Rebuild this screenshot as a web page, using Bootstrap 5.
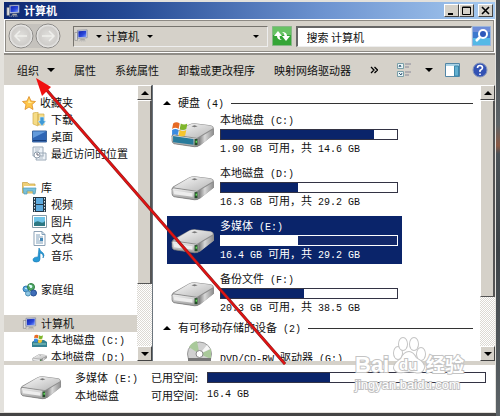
<!DOCTYPE html>
<html lang="zh-CN">
<head>
<meta charset="utf-8">
<meta name="viewport" content="width=device-width, initial-scale=1">
<title>计算机</title>
<link href="https://cdn.jsdelivr.net/npm/bootstrap@5.3.0/dist/css/bootstrap.min.css" rel="stylesheet">
<style>
:root{--face:#d5d1c9;--navy:#0a246a}
body{font:11px/17px "Noto Sans CJK SC",sans-serif;color:#111;background:#fff;white-space:nowrap}
button,input{font:inherit;color:inherit}
svg{display:block;flex:none}
.plain{border:0;background:none;padding:0}
.lt{font-family:"Liberation Mono",monospace;font-size:10px;white-space:pre}
.shell{padding:2px 1px 1px 4px;background:#e3e1dc;border-bottom:3px solid #444;overflow:hidden}
.desk{width:4px;background:linear-gradient(#454a4e,#5d6468 30%,#8b5a45 35%,#4b5257 37%,#3d4347 60%,#5d6468)}
.caption{height:17px;background:linear-gradient(90deg,#0d2872,#254a94 25%,#6d93d0 65%,#a6caf0);color:#fff;font-weight:700;padding:0 2px}
.raised{background:var(--face);border:1px solid;border-color:#fff #444 #444 #fff;display:flex;align-items:center;justify-content:center;padding:0}
.caption .raised{width:15px;height:13px;color:#000}
.address{height:34px;background:var(--face);border:1px solid #fff;outline:1px solid #8d8a84;outline-offset:-2px;padding:0 3px}
.travel{margin-right:12px}
.sunken{flex:192 1 0;height:21px;border:1px solid;border-color:#77746e #eee #eee #77746e;background:var(--face)}
.search{flex:155 1 0;height:21px;border:1px solid;border-width:2px 1px 1px 2px;border-color:#666 #eee #eee #666;background:#fff;padding:0 9px;min-width:0;border-radius:0}
.commands{height:32px;border-top:2px solid #908d87;background:var(--face);padding:0 16px 0 13px;gap:19px}
.tools,.tools button{gap:12px}
.tri{width:0;height:0;border:4px solid transparent;border-top-color:#000;border-bottom:0;flex:none}
.tri.sm{border-width:3px 3px 0}
.tri.up{border:4px solid transparent;border-bottom-color:#000;border-top:0}
.tree{width:133px;padding-top:9px;background:#fff}
.tree a{display:flex;align-items:center;height:17px;gap:4px;padding-left:18px;color:inherit;text-decoration:none}
.tree a.sub{padding-left:28px}
.tree a.on{background:var(--face)}
.tree .space{height:17px}
.scroller{width:15px;background:repeating-conic-gradient(#fff 0 25%,#dcd9d3 0 50%) 0 0/2px 2px}
.scroller .raised{height:15px;width:15px;flex:none}
.thumb{border:1px solid;border-color:#fff #555 #555 #fff;border-right-width:2px;background:var(--face)}
.thumb.a{flex:0 1 184px}.thumb.b{flex:0 1 197px}
.pane{background:#fff;padding:5px 7px 0 11px;overflow:hidden}
.group{height:18px;gap:7px;margin-left:-1px}
.group hr{margin:0;opacity:1;border-top:1px solid #333}
.drives{gap:5px;padding:0 0 2px 3px;margin-top:-2px}
.drive{height:48px;width:235px;max-width:100%;padding:0 4px 0 3px;gap:5px;text-align:left}
.drive .info{line-height:14px}
.meter{height:11px;border-radius:0;border:1px solid #334;background:#fff}
.meter .progress-bar{background:var(--navy)}
.drive.on{background:var(--navy);color:#fff}
.drive.on .meter{border-color:#fff;background:#12286a}
.drive.on .progress-bar{background:#fff}
.disc{padding-left:23px}
.details{background:#fff;border-top:4px solid var(--face);height:51px;padding:3px 9px 0 15px;line-height:18px;gap:13px}
.details dl{grid-template-columns:76px 56px 1fr;grid-auto-rows:18px}
.overlay{left:0;top:0;pointer-events:none}
.stamp{right:31px;bottom:17px;width:116px;height:62px}
</style>
<script src="https://cdn.jsdelivr.net/npm/bootstrap@5.3.0/dist/js/bootstrap.bundle.min.js"></script>
</head>
<body class="m-0">
<svg width="0" height="0" class="position-absolute" aria-hidden="true">
<defs>
<linearGradient id="gTop" x1="0" x2="1" y1="0" y2="1"><stop stop-color="#fafafa"/><stop offset="1" stop-color="#b4b4b4"/></linearGradient>
<linearGradient id="gSide" x1="0" x2="1"><stop stop-color="#777"/><stop offset=".4" stop-color="#d8d8d8"/><stop offset="1" stop-color="#8a8a8a"/></linearGradient>
<linearGradient id="gFront" x1="0" x2="0" y1="0" y2="1"><stop stop-color="#f4f4f4"/><stop offset="1" stop-color="#9b9b9b"/></linearGradient>
<linearGradient id="gScr" x1="0" x2="1" y1="0" y2="1"><stop stop-color="#0d1fa8"/><stop offset=".6" stop-color="#2b49dd"/><stop offset="1" stop-color="#8ba8ff"/></linearGradient>
<radialGradient id="gBall"><stop stop-color="#e0dfdc"/><stop offset=".75" stop-color="#cfcdca"/><stop offset="1" stop-color="#f3f3f2"/></radialGradient>
</defs>
<symbol id="drive" viewBox="0 0 44 26">
<path d="M2 16Q1 14 3 12L19 3Q21 2 24 2L40 4Q43 5 43 8V13L29 24Q27 25 24 25L4 22Q2 21 2 19Z" fill="#8d8d8d"/>
<path d="M3 13L19 3.500Q21 2.500 24 2.500L40 4.500Q42 5 42 7L27 16Q25 17 23 16.500Z" fill="url(#gTop)"/>
<path d="M28 16.500L43 7.500V13L29 24Z" fill="url(#gSide)"/>
<path d="M2 15Q2 13 4 13.500L25 16.500Q28 17 28 19V24Q27 25 24 25L4 22Q2 21 2 19Z" fill="url(#gFront)" stroke="#777" stroke-width=".7"/>
<path d="M4 16L22 18.500V22L4 19.500Z" fill="#ededed"/><path d="M24 17.500h3v6h-3z" fill="#244b28"/><path d="M25 19h1.500v2h-1.500z" fill="#62e05a"/>
<path d="M21 5l3-1 3 1-3 1z" fill="#777"/>
</symbol>
<symbol id="flag" viewBox="0 0 14 14"><path d="M1 2Q4 0 7 2L6 7Q3 5 0 7Z" fill="#e66a25"/><path d="M8 2Q11 4 14 2L13 7Q10 9 7 7Z" fill="#7fb62c"/><path d="M0 8Q3 6 6 8L5 13Q2 11 0 13Z" fill="#3b8be0"/><path d="M7 8Q10 10 13 8L12 13Q9 15 6 13Z" fill="#f6c52e"/></symbol>
<symbol id="sysdrive" viewBox="0 0 44 26"><use href="#drive" width="44" height="26"/><path d="M3 14.500L23 17.500V23L3 20.500Z" fill="#287b9b"/><use href="#flag" x="2" y="0" width="15" height="15"/></symbol>
<symbol id="pc" viewBox="0 0 16 16"><path d="M1 4h3v9H1z" fill="#dedede" stroke="#777" stroke-width=".6"/><path d="M4 1.500L15 1V10L4 10.500Z" fill="#dfe3ef" stroke="#66708c" stroke-width=".7"/><path d="M5 2.500L14 2V9L5 9.500Z" fill="url(#gScr)"/><path d="M8 11h4l1 2H6z" fill="#a8a8a8"/><path d="M4 14h10" stroke="#bbb" stroke-dasharray="1 1"/></symbol>
</svg>

<div class="d-flex vh-100 position-relative overflow-hidden">
<div class="shell d-flex flex-column flex-grow-1">
  <header class="caption d-flex align-items-center">
    <svg width="14" height="14"><use href="#pc"/></svg><span class="ms-1 me-auto">计算机</span>
    <button class="raised" aria-label="最小化"><svg width="9" height="9"><path d="M1 7h5v2H1z"/></svg></button>
    <button class="raised" aria-label="最大化"><svg width="9" height="9"><path d="M.5 1h8v7.500h-8zM.5 1.500h8" fill="none" stroke="#000"/></svg></button>
    <button class="raised ms-1" aria-label="关闭"><svg width="9" height="9"><path d="M1 1l7 7M8 1L1 8" stroke="#000" stroke-width="1.600"/></svg></button>
  </header>

  <div class="address d-flex align-items-center flex-shrink-0">
    <svg width="53" height="26" class="travel" role="img" aria-label="后退 前进"><path d="M13 1h27v24H13z" fill="#c5c2bd"/><g fill="url(#gBall)" stroke="#8d8b88"><circle cx="13" cy="13" r="12"/><circle cx="40" cy="13" r="12"/></g><g fill="none" stroke="#efefec" stroke-width="1.500"><path d="M19 13H8M12 8l-5 5 5 5M34 13h11M41 8l5 5-5 5"/></g></svg>
    <div class="sunken d-flex align-items-center">
      <svg width="14" height="14"><use href="#pc"/></svg>
      <i class="tri sm ms-2"></i><button class="plain ms-1">计算机</button><i class="tri sm ms-2 me-auto"></i><i class="tri sm me-2"></i>
    </div>
    <button class="plain mx-1" aria-label="刷新"><svg width="20" height="20"><path d="M.5 .5h19v19H.5z" fill="#35a536" stroke="#87b787"/><path d="M1 1h18v8H1z" fill="#67c264"/><path d="M2 10l4-5 4 5H7.500q0 3 2.500 4-5 0-5-4zM18 10l-4 5-4-5h2.500q0-3-2.500-4 5 0 5 4z" fill="#fff"/></svg></button>
    <input class="search" aria-label="搜索" value="搜索 计算机">
    <button class="plain" aria-label="开始搜索"><svg width="19" height="20"><path d="M.5 .5h18v19H.5z" fill="#3d79ce" stroke="#9bb5dc"/><path d="M1 12h17v7H1z" fill="#55b9e6"/><path d="M1 1h17v5H1z" fill="#6d8cd8"/><circle cx="11" cy="8" r="4" fill="#2d58bb" stroke="#fff" stroke-width="2"/><path d="M8 11l-4 4" stroke="#fff" stroke-width="2.500"/></svg></button>
  </div>

  <nav class="commands d-flex align-items-center flex-shrink-0">
    <button class="plain d-flex align-items-center">组织<i class="tri ms-2"></i></button>
    <button class="plain">属性</button><button class="plain">系统属性</button><button class="plain">卸载或更改程序</button><button class="plain">映射网络驱动器</button>
    <button class="plain" aria-label="更多"><svg width="8" height="8"><path d="M1 1l3 3-3 3M4.500 1l3 3-3 3" fill="none" stroke="#000" stroke-width="1.300"/></svg></button>
    <div class="tools d-flex align-items-center ms-auto">
      <button class="plain d-flex align-items-center" aria-label="更改视图"><svg width="16" height="16"><path d="M.5 1.500h6v5h-6zM.5 9.500h6v5h-6z" fill="#e8f4f6" stroke="#7a9fa8"/><path d="M2 5l1-2 1 2M2 11l2 2 1-2" stroke="#357" fill="none"/><path d="M8 2h6M8 5h4M8 10h6M8 13h4" stroke="#889"/></svg><i class="tri"></i></button>
      <button class="plain" aria-label="预览窗格"><svg width="15" height="14"><path d="M.5 .5h14v13H.5z" fill="#fff" stroke="#5286a6"/><path d="M1 1h13v2H1z" fill="#a9d2e6"/><path d="M9.500 3h4v10h-4z" fill="#62afd0" stroke="#3a86aa"/></svg></button>
      <button class="plain" aria-label="帮助"><svg width="16" height="16"><circle cx="8" cy="8" r="7" fill="#3352b4" stroke="#8494ba"/><path d="M5.500 6q0-2.500 2.500-2.500T10.500 6Q10.500 7 8 8.500V10M8 11.500v1.500" fill="none" stroke="#fff" stroke-width="1.600"/></svg></button>
    </div>
  </nav>

  <main class="d-flex flex-grow-1 overflow-hidden" style="flex-basis:0">
    <nav class="tree flex-shrink-0 overflow-hidden">
      <a href="#"><svg width="14" height="14"><path d="M7 .5l2 4.500 4.500.5-3.500 3 1 5L7 11l-4 2.500 1-5L.5 5.500 5 5z" fill="#ffc74b" stroke="#dc8c24" stroke-width=".8"/><path d="M7 3l1 3 3 1H6z" fill="#fff0a8"/></svg>收藏夹</a>
      <a href="#" class="sub"><svg width="15" height="15"><path d="M1 1l5-1v14l-5-2zM6 2h6v11H6z" fill="#f6dc86" stroke="#d0ad4c" stroke-width=".7"/><path d="M8 5h4v4h2l-4 5-4-5h2z" fill="#3f9ad6" stroke="#d6eefb" stroke-width=".6"/></svg>下载</a>
      <a href="#" class="sub"><svg width="15" height="13"><path d="M.5 1h14v11H.5z" fill="#2f66b5" stroke="#3e679e"/><path d="M1 1.500h13L1 8z" fill="#639bdc"/><path d="M1 10.500h13" stroke="#153b78"/></svg>桌面</a>
      <a href="#" class="sub"><svg width="15" height="15"><path d="M1 1h10v9H1zM5 7h9v7H4z" fill="#edf2f7" stroke="#9caab8"/><path d="M3 3h5M3 5h4M7 10h5M7 12h4" stroke="#b4bfca"/><circle cx="5" cy="9" r="3" fill="#fff" stroke="#8f9dac"/><path d="M5 7v2h2" fill="none" stroke="#667"/></svg>最近访问的位置</a>
      <div class="space"></div>
      <a href="#"><svg width="15" height="14"><path d="M.5 3V1.500h5L7 3h6v9H.5z" fill="#efcf77" stroke="#caa74e" stroke-width=".8"/><path d="M2 5h12v2H2z" fill="#fff"/><path d="M1 7h13l-1 6h-2v-3H5v3H2z" fill="#7ac1da" stroke="#4f9cba" stroke-width=".7"/></svg>库</a>
      <a href="#" class="sub"><svg width="15" height="15"><path d="M1 0h13v15H1z" fill="#243746"/><path d="M4 1h7v6H4zM4 8h7v6H4z" fill="#5eabdf"/><path d="M2.500 1v14M12.500 1v14" stroke="#dce8ed" stroke-dasharray="1.500 1.500"/></svg>视频</a>
      <a href="#" class="sub"><svg width="15" height="13"><path d="M.5 .5h14v12H.5z" fill="#fff" stroke="#849ba8"/><path d="M2 2h11v9H2z" fill="#70c5e9"/><path d="M2 8q3-3 6-1t5-1v5H2z" fill="#2d7883"/></svg>图片</a>
      <a href="#" class="sub"><svg width="15" height="15"><path d="M2 .5h8l3 3v11H2z" fill="#fff" stroke="#8ca1b5"/><path d="M10 .5v3h3M4 4h4M4 6h7M4 8h3M4 10h7M4 12h7" fill="none" stroke="#7e9fba"/><path d="M8 7h3v3H8z" fill="#4488b8"/></svg>文档</a>
      <a href="#" class="sub"><svg width="15" height="15"><path d="M7 0q1 3 4 5 2 2 0 5 1-4-3-5v6q0 3-3.500 3T1 12q0-3 5-3z" fill="#299bd6" stroke="#1479b6" stroke-width=".6"/></svg>音乐</a>
      <div class="space"></div>
      <a href="#"><svg width="15" height="14"><circle cx="4" cy="6" r="3" fill="#57a5dc" stroke="#367bb3"/><circle cx="9" cy="4" r="3.500" fill="#51a965" stroke="#337f47"/><circle cx="11.500" cy="10" r="3" fill="#3f6eb9" stroke="#254e91"/><circle cx="6" cy="10.500" r="2.500" fill="#8ec6e5" stroke="#4c8eb3"/><path d="M7 2l3 1-1 2zM3 5l2 1" fill="#dff" stroke="#dff"/></svg>家庭组</a>
      <div class="space"></div>
      <a href="#" class="on"><svg width="15" height="14"><use href="#pc"/></svg>计算机</a>
      <a href="#" class="sub"><svg width="15" height="14"><path d="M0 8l3-2h9l3 2v5H0z" fill="#368293"/><path d="M1 10h13" stroke="#8fd0c4"/><use href="#flag" x="2" width="9" height="9"/></svg><span>本地磁盘<span class="lt"> (C:)</span></span></a>
      <a href="#" class="sub"><svg width="15" height="11"><use href="#drive" y="1" width="15" height="10"/></svg><span>本地磁盘<span class="lt"> (D:)</span></span></a>
    </nav>
    <div class="scroller d-flex flex-column flex-shrink-0"><button class="raised" aria-label="向上滚动"><i class="tri up"></i></button><div class="thumb a"></div><div class="flex-grow-1"></div><button class="raised" aria-label="向下滚动"><i class="tri"></i></button></div>
    <section class="pane flex-grow-1 border-start border-secondary">
      <div class="group d-flex align-items-center mt-1"><i class="tri sm up"></i><span>硬盘<span class="lt"> (4)</span></span><hr class="flex-grow-1"></div>
      <div class="drives d-flex flex-column">
        <button class="plain drive d-flex align-items-center"><svg width="45" height="27"><use href="#sysdrive"/></svg><span class="info flex-grow-1 d-block"><span class="d-block">本地磁盘<span class="lt"> (C:)</span></span><span class="progress meter"><span class="progress-bar" style="width:87%"></span></span><span class="d-block"><span class="lt">1.90 GB </span>可用，共<span class="lt"> 14.6 GB</span></span></span></button>
        <button class="plain drive d-flex align-items-center"><svg width="45" height="27"><use href="#drive"/></svg><span class="info flex-grow-1 d-block"><span class="d-block">本地磁盘<span class="lt"> (D:)</span></span><span class="progress meter"><span class="progress-bar" style="width:44%"></span></span><span class="d-block"><span class="lt">16.3 GB </span>可用，共<span class="lt"> 29.2 GB</span></span></span></button>
        <button class="plain drive on d-flex align-items-center"><svg width="45" height="27"><use href="#drive"/></svg><span class="info flex-grow-1 d-block"><span class="d-block">多媒体<span class="lt"> (E:)</span></span><span class="progress meter"><span class="progress-bar" style="width:44%"></span></span><span class="d-block"><span class="lt">16.4 GB </span>可用，共<span class="lt"> 29.2 GB</span></span></span></button>
        <button class="plain drive d-flex align-items-center"><svg width="45" height="27"><use href="#drive"/></svg><span class="info flex-grow-1 d-block"><span class="d-block">备份文件<span class="lt"> (F:)</span></span><span class="progress meter"><span class="progress-bar" style="width:47%"></span></span><span class="d-block"><span class="lt">20.3 GB </span>可用，共<span class="lt"> 38.5 GB</span></span></span></button>
      </div>
      <div class="group d-flex align-items-center"><i class="tri sm up"></i><span>有可移动存储的设备<span class="lt"> (2)</span></span><hr class="flex-grow-1"></div>
      <div class="disc d-flex gap-2 pt-1"><svg width="25" height="27"><circle cx="12.500" cy="13" r="12" fill="#d0d0d0" stroke="#999"/><path d="M12.500 13L2 6q3-5 8-6zM12.500 13L24 18V8z" fill="#a9c99a"/><path d="M12.500 13L20 4l3 4z" fill="#f7f7f7"/><circle cx="12.500" cy="13" r="3.500" fill="#fff" stroke="#888"/><path d="M1 17h23v9H1z" fill="#777"/></svg><span class="pt-2"><span class="lt">DVD/CD-RW </span>驱动器<span class="lt"> (G:)</span></span></div>
    </section>
    <div class="scroller d-flex flex-column flex-shrink-0"><button class="raised" aria-label="向上滚动"><i class="tri up"></i></button><div class="thumb b"></div><div class="flex-grow-1"></div><button class="raised" aria-label="向下滚动"><i class="tri"></i></button></div>
  </main>

  <footer class="details d-flex flex-shrink-0">
    <svg width="43" height="36" class="mt-1"><use href="#drive" width="43" height="30"/></svg>
    <dl class="d-grid flex-grow-1 mb-0">
      <dt class="fw-normal">多媒体<span class="lt"> (E:)</span></dt><dd class="m-0">已用空间:</dd><dd class="m-0"><div class="progress meter mt-1"><div class="progress-bar" style="width:44%"></div></div></dd>
      <dt class="fw-normal">本地磁盘</dt><dd class="m-0">可用空间:</dd><dd class="m-0 lt">16.4 GB</dd>
    </dl>
  </footer>
</div>
<div class="desk flex-shrink-0"></div>

<svg class="overlay position-absolute" width="290" height="370" aria-hidden="true"><path d="M44 87L285 364" stroke="#7e2020" stroke-width="3"/><path d="M44 87L285 364" stroke="#e01313" stroke-width="2"/><path d="M36 78L51 87 42 96Z" fill="#f01010"/></svg>
<svg class="stamp position-absolute" viewBox="0 0 116 62" font-family="Liberation Sans, Noto Sans CJK SC, sans-serif" font-weight="700" fill="#fff" stroke="#c4c4c4" stroke-width="2" paint-order="stroke">
<g><ellipse cx="45" cy="16" rx="4" ry="6"/><ellipse cx="50" cy="7" rx="4" ry="6"/><ellipse cx="61" cy="7" rx="4" ry="6"/><ellipse cx="68" cy="17" rx="4" ry="6"/><path d="M56 15q4 0 7 6 9 5 8 10-2 6-9 4-6-1-12 0-8 1-9-4 0-5 7-9 3-7 8-7z"/></g>
<text x="2" y="35" font-size="22">Bai</text><text x="46" y="33" font-size="15">du</text><text x="73" y="35" font-size="19">经验</text>
<text x="2" y="52" font-size="13" font-weight="400">jingyan.baidu.com</text>
</svg>
</div>
</body>
</html>
